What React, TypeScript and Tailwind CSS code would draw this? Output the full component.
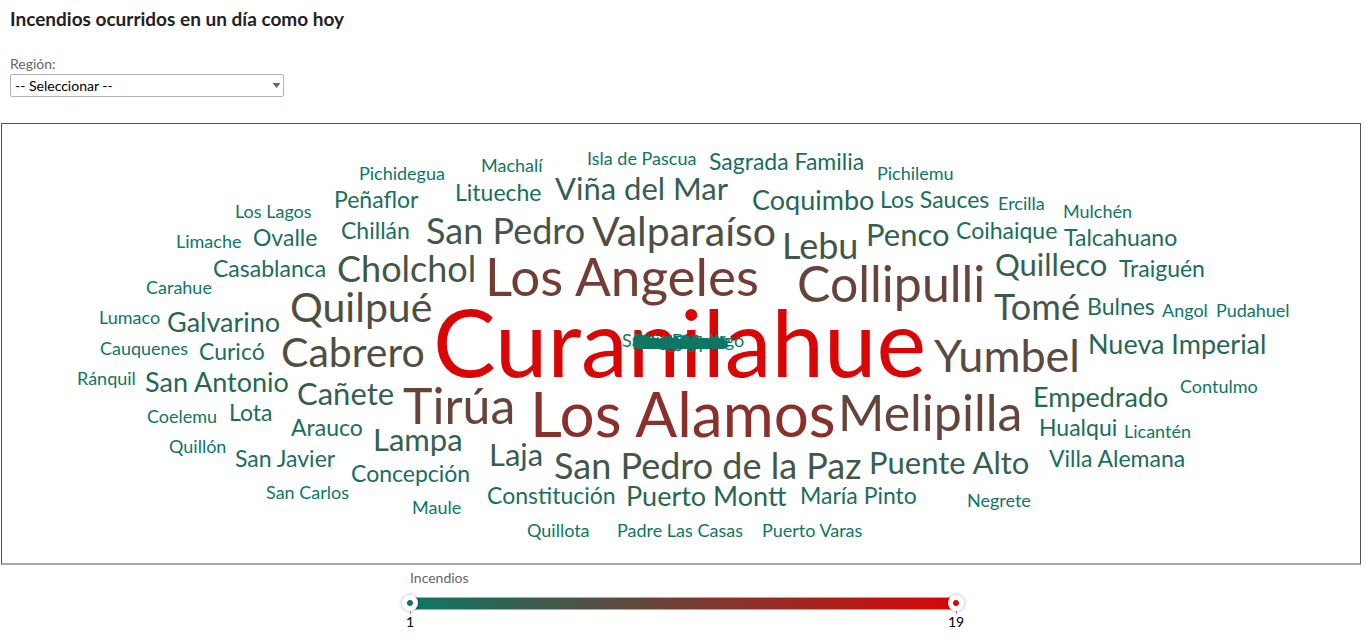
import React, { useState } from "react";
import clsx from "clsx";

type Tier = keyof typeof tiers;
type Word = [text: string, tier: Tier, left: number, baseline: number];

const tiers = {
  1: { size: 18, style: "text-[18px] text-[#0d7764]" },
  2: { size: 23, style: "text-[23px] text-[#1a6e5d]" },
  3: { size: 27, style: "text-[27px] text-[#266753]" },
  4: { size: 31, style: "text-[31px] text-[#345f51]" },
  5: { size: 36, style: "text-[36px] text-[#42574a]" },
  6: { size: 41, style: "text-[41px] text-[#4e4f42]" },
  7: { size: 45, style: "text-[45px] text-[#5a4a40]" },
  8: { size: 50, style: "text-[50px] text-[#67443a]" },
  9: { size: 53, style: "text-[53px] text-[#733d35]" },
  11: { size: 62, style: "text-[62px] text-[#8a302b]" },
  19: { size: 94, style: "text-[94px] text-[#da0505]" },
};

/* Positions are measured from the cloud's origin, near its top centre. */
const origin = { x: 1, y: 1 };

const words: Word[] = [
  ["Curanilahue", 19, -249, 252],
  ["Los Alamos", 11, -152, 312],
  ["Los Angeles", 9, -197, 171],
  ["Collipulli", 8, 115, 177],
  ["Melipilla", 8, 156, 306],
  ["Tirúa", 8, -279, 299],
  ["Yumbel", 7, 252, 248],
  ["Valparaíso", 6, -90, 121],
  ["Quilpué", 6, -392, 197],
  ["Cabrero", 6, -401, 242],
  ["San Pedro", 5, -256, 119],
  ["Cholchol", 5, -345, 157],
  ["Lebu", 5, 100, 134],
  ["Tomé", 5, 312, 195],
  ["San Pedro de la Paz", 5, -128, 354],
  ["Viña del Mar", 4, -127, 75],
  ["Penco", 4, 184, 121],
  ["Quilleco", 4, 313, 151],
  ["Cañete", 4, -385, 280],
  ["Lampa", 4, -309, 326],
  ["Laja", 4, -193, 341],
  ["Puente Alto", 4, 187, 349],
  ["Coquimbo", 3, 70, 85],
  ["Galvarino", 3, -515, 207],
  ["San Antonio", 3, -537, 267],
  ["Nueva Imperial", 3, 406, 229],
  ["Empedrado", 3, 351, 282],
  ["Puerto Montt", 3, -56, 381],
  ["Sagrada Familia", 2, 27, 45],
  ["Litueche", 2, -227, 76],
  ["Peñaflor", 2, -348, 83],
  ["Chillán", 2, -341, 114],
  ["Ovalle", 2, -429, 121],
  ["Casablanca", 2, -469, 152],
  ["Los Sauces", 2, 198, 83],
  ["Coihaique", 2, 274, 114],
  ["Talcahuano", 2, 382, 121],
  ["Traiguén", 2, 437, 152],
  ["Bulnes", 2, 405, 190],
  ["Curicó", 2, -483, 235],
  ["Lota", 2, -453, 296],
  ["Arauco", 2, -391, 311],
  ["San Javier", 2, -447, 342],
  ["Concepción", 2, -331, 357],
  ["Constitución", 2, -195, 379],
  ["María Pinto", 2, 118, 379],
  ["Hualqui", 2, 357, 311],
  ["Villa Alemana", 2, 367, 342],
  ["Pichidegua", 1, -323, 55],
  ["Machalí", 1, -201, 47],
  ["Isla de Pascua", 1, -95, 40],
  ["Pichilemu", 1, 195, 55],
  ["Ercilla", 1, 316, 85],
  ["Mulchén", 1, 381, 93],
  ["Los Lagos", 1, -447, 93],
  ["Limache", 1, -506, 123],
  ["Carahue", 1, -536, 169],
  ["Lumaco", 1, -583, 199],
  ["Cauquenes", 1, -582, 230],
  ["Ránquil", 1, -605, 260],
  ["Coelemu", 1, -535, 298],
  ["Quillón", 1, -513, 328],
  ["San Carlos", 1, -416, 374],
  ["Maule", 1, -270, 389],
  ["Quillota", 1, -155, 412],
  ["Padre Las Casas", 1, -65, 412],
  ["Puerto Varas", 1, 80, 412],
  ["Negrete", 1, 285, 382],
  ["Contulmo", 1, 498, 268],
  ["Licantén", 1, 442, 313],
  ["Angol", 1, 480, 192],
  ["Pudahuel", 1, 534, 192],
  /* Communes with no free spot of their own pile up in the centre. */
  ["Santo Domingo", 1, -60, 222],
  ["Puchuncaví", 1, -47, 224],
  ["Chiguayante", 1, -50, 222],
  ["El Carmen", 1, -42, 224],
  ["San Ignacio", 1, -47, 223],
  ["Nacimiento", 1, -46, 224],
  ["Santa Juana", 1, -49, 222],
  ["Panguipulli", 1, -44, 224],
  ["Antofagasta", 1, -49, 224],
  ["Llanquihue", 1, -44, 223],
  ["Los Andes", 1, -42, 224],
  ["Purranque", 1, -42, 224],
  ["Santa María", 1, -49, 223],
  ["San Rafael", 1, -41, 224],
];

function WordCloud() {
  return (
    <section
      aria-label="Incendios por comuna"
      className="relative mr-[5px] ml-px h-[442px] overflow-hidden border border-b-2 border-[#555] border-b-[#aaa]"
    >
      {words.map(([text, tier, left, baseline]) => {
        const { size, style } = tiers[tier];
        return (
          <span
            key={text}
            className={clsx("absolute leading-none whitespace-nowrap", style)}
            style={{
              left: `calc(50% + ${origin.x + left}px)`,
              top: origin.y + baseline - Math.round(size * 0.887),
            }}
          >
            {text}
          </span>
        );
      })}
    </section>
  );
}

const thumb =
  "pointer-events-none absolute -inset-x-2 top-0 h-4 appearance-none bg-transparent outline-none [&::-webkit-slider-thumb]:pointer-events-auto [&::-webkit-slider-thumb]:size-4 [&::-webkit-slider-thumb]:appearance-none [&::-webkit-slider-thumb]:rounded-full [&::-webkit-slider-thumb]:shadow-[0_0_3px_1px_rgba(0,0,0,0.22)]";

function RangeLegend() {
  const [low, setLow] = useState(1);
  const [high, setHigh] = useState(19);
  return (
    <div className="mx-auto w-2/5 max-w-[546px] min-w-64 pt-[3px]">
      <p className="text-[14px] leading-5 text-[#666]">Incendios</p>
      <div className="relative mt-[7px] h-4">
        <div className="absolute inset-x-0 top-[2px] h-[13px] border-y border-[#aaa] bg-linear-to-r/srgb from-[#0d7764] to-[#da0505]" />
        <input
          type="range"
          aria-label="Mínimo de incendios"
          min={1}
          max={19}
          value={low}
          onChange={(e) => setLow(Math.min(+e.target.value, high))}
          className={clsx(
            thumb,
            "[&::-webkit-slider-thumb]:bg-[radial-gradient(circle,#0d7764_2.5px,white_3.5px)]",
          )}
        />
        <input
          type="range"
          aria-label="Máximo de incendios"
          min={1}
          max={19}
          value={high}
          onChange={(e) => setHigh(Math.max(+e.target.value, low))}
          className={clsx(
            thumb,
            "[&::-webkit-slider-thumb]:bg-[radial-gradient(circle,#da0505_2.5px,white_3.5px)]",
          )}
        />
      </div>
      <div className="-mx-2 flex justify-between text-[14px] leading-4 text-black">
        {[low, high].map((value, i) => (
          <div key={i} className="flex w-4 flex-col items-center">
            <span className="h-[3px] w-px bg-[#999]" />
            <span>{value}</span>
          </div>
        ))}
      </div>
    </div>
  );
}

export default function App() {
  return (
    <main className="bg-white font-[Lato,sans-serif]">
      <header className="px-[10px] pt-[7px] pb-[26px]">
        <h1 className="text-[19px] leading-6 font-bold text-[#222]">
          Incendios ocurridos en un día como hoy
        </h1>
        <label htmlFor="region" className="mt-[23px] block text-[14px] leading-5 text-[#666]">
          Región:
        </label>
        <div className="relative w-[274px] max-w-full">
          <select
            id="region"
            className="block h-[23px] w-full appearance-none rounded-[2px] border border-[#b0b0c8] bg-white pr-5 pl-1 text-[14px] leading-5 text-black"
          >
            <option>-- Seleccionar --</option>
          </select>
          <svg
            viewBox="0 0 8 5"
            className="pointer-events-none absolute top-[9px] right-[3px] h-[5px] w-[9px] fill-[#666]"
            aria-hidden="true"
          >
            <path d="M0 0h8L4 5z" />
          </svg>
        </div>
      </header>
      <WordCloud />
      <RangeLegend />
    </main>
  );
}
